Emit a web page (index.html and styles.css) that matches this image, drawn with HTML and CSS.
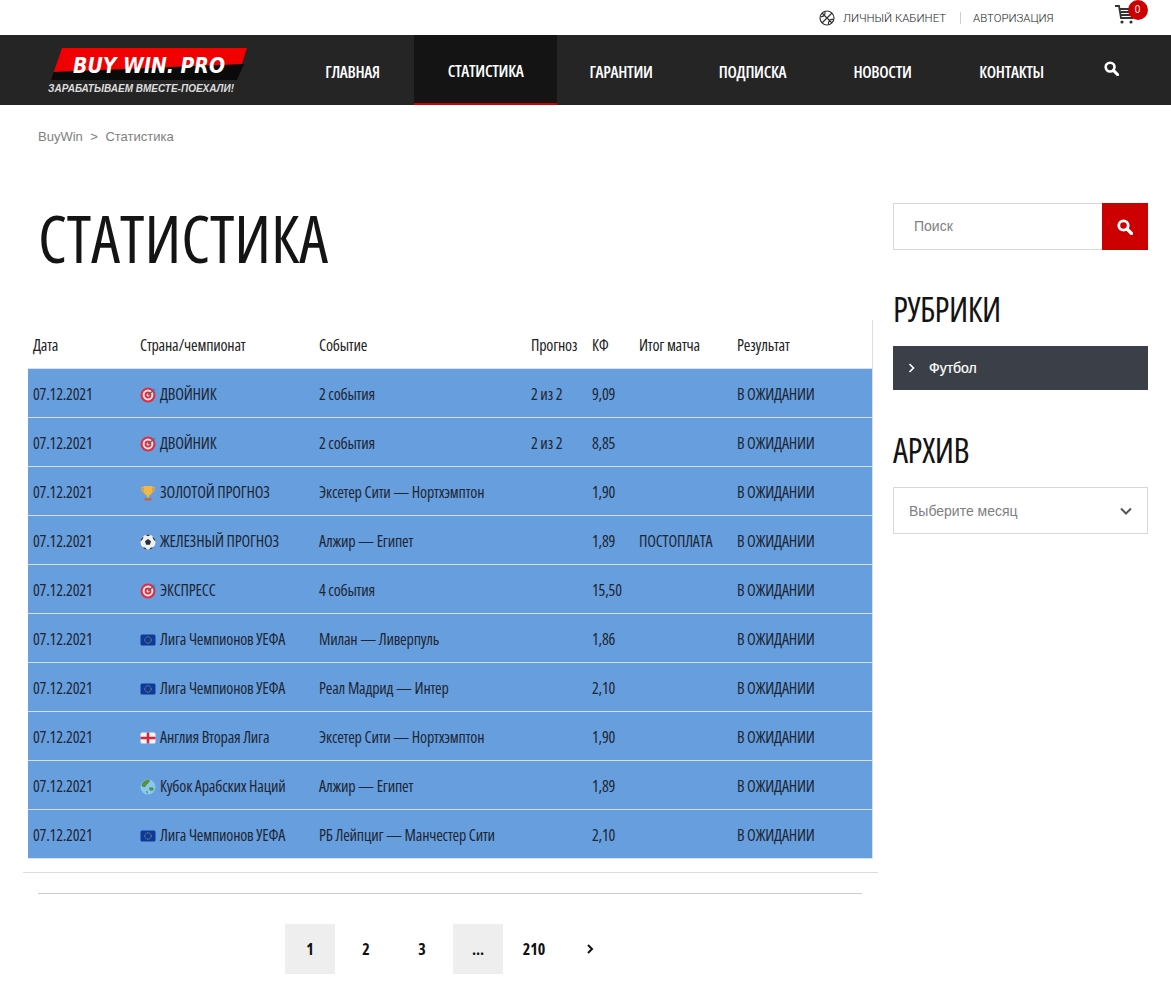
FILE: index.html
```html
<!DOCTYPE html>
<html lang="ru">
<head>
  <meta charset="UTF-8">
  <meta name="viewport" content="width=device-width, initial-scale=1.0">
  <title>Статистика</title>
  <link rel="stylesheet" href="styles.css">
</head>
<body>
  <svg class="icon-defs" aria-hidden="true">
    <symbol id="i-target" viewBox="0 0 16 16">
      <circle cx="8" cy="8" r="7.5" fill="#dd2e44"/>
      <circle cx="8" cy="8" r="5.4" fill="#f5e6e8"/>
      <circle cx="8" cy="8" r="3.4" fill="#dd2e44"/>
      <circle cx="8" cy="8" r="1.5" fill="#f5e6e8"/>
      <path d="M8 8l6-5" stroke="#55606b" stroke-width="1.2"/>
      <path d="M13 1.5l2.5 1-2 2z" fill="#3b88c3"/>
    </symbol>
    <symbol id="i-trophy" viewBox="0 0 16 16">
      <path d="M1 2h14v2.5c0 2-1.700 3.500-4 3.500H5C2.700 8 1 6.500 1 4.500z" fill="#e0a63a"/>
      <path d="M2.500 3.300h11v1.200c0 1.300-1 2.200-2.500 2.200H5c-1.500 0-2.500-.9-2.500-2.200z" fill="#679edd"/>
      <path d="M3.500 1h9v4.500c0 2.800-2 4.500-3.500 5v2H7v-2c-1.500-.5-3.500-2.200-3.500-5z" fill="#f4b73f"/>
      <path d="M4.500 13h7v2.500h-7z" fill="#c1694f"/>
    </symbol>
    <symbol id="i-ball" viewBox="0 0 16 16">
      <circle cx="8" cy="8" r="7.5" fill="#eef0f2"/>
      <path d="M8 5l3 2.200-1.100 3.500H6.100L5 7.200z" fill="#292f33"/>
      <path d="M5.500 .9L8 2.200 10.500 .9 8 .5zM.6 7.500L2.800 5 3.600 2.400C1.700 3.700.6 5.400.6 7.500zM15.400 7.500L13.200 5l-.8-2.600c1.900 1.300 3 3 3 5.100zM2.600 13.200l2.900.5 1.300 1.700c-1.800-.2-3.200-1-4.200-2.200zM13.400 13.200l-2.900.5-1.300 1.700c1.800-.2 3.200-1 4.200-2.200z" fill="#292f33"/>
    </symbol>
    <symbol id="i-eu" viewBox="0 0 16 16">
      <rect x="0.500" y="2.500" width="15" height="11" rx="1.500" fill="#0d3a9a"/>
      <circle cx="8" cy="8" r="3.200" fill="none" stroke="#e8c53a" stroke-width="0.8" stroke-dasharray="0.800 0.900"/>
    </symbol>
    <symbol id="i-eng" viewBox="0 0 16 16">
      <rect x="0.500" y="2.500" width="15" height="11" rx="1.500" fill="#f2f4f6"/>
      <path d="M6.700 2.500h2.600v11H6.700zM.5 6.700h15v2.600H.5z" fill="#d9263c"/>
    </symbol>
    <symbol id="i-globe" viewBox="0 0 16 16">
      <circle cx="8" cy="8" r="7.500" fill="#88c9f0"/>
      <path d="M1.500 6c1-3 3.500-5 7-5.400 1.500.6 1.500 2 .5 3S7.500 5 6.500 6 5.500 8.500 4 8.300 2 7 1.500 6z" fill="#5c913b"/>
      <path d="M9.500 8.500c1.500-.5 3-.5 4 .5.500 1 0 2.200-1.300 2.700-1.200.3-2.700-.2-3-1.400-.2-.8-.2-1.500.3-1.800zM6 11.500l1.500 1 .5 2-1.500-.5z" fill="#5c913b"/>
    </symbol>
    <symbol id="i-search" viewBox="0 0 16 16">
      <circle cx="6.500" cy="6.500" r="4.700" fill="none" stroke="currentColor" stroke-width="2.800"/>
      <path d="M10 10l4.500 4.500" stroke="currentColor" stroke-width="3.200" stroke-linecap="round"/>
    </symbol>
  </svg>

  <div class="topbar">
    <svg class="ball-icon" width="16" height="16" viewBox="0 0 16 16" fill="none" stroke="#333" stroke-width="1.200">
      <circle cx="8" cy="8" r="7"/>
      <path d="M3 3l10 10M13 3L3 13M6 1.500C6.500 5 4.500 7 1.500 6.500M14.500 9.500C11 9 9 11 9.500 14.500"/>
    </svg>
    <a class="toplink" href="#">ЛИЧНЫЙ КАБИНЕТ</a>
    <span class="topdivider"></span>
    <a class="toplink" href="#">АВТОРИЗАЦИЯ</a>
    <div class="cart">
      <svg width="21" height="21" viewBox="0 0 21 21" fill="none" stroke="#333" stroke-width="1.800">
        <path d="M0 2h4l2 12h12"/>
        <path d="M5 5h13M5.500 8h12M6 11h11"/>
        <circle cx="7" cy="18" r="1.600" fill="#333" stroke="none"/>
        <circle cx="16" cy="18" r="1.600" fill="#333" stroke="none"/>
      </svg>
      <span class="cart-badge">0</span>
    </div>
  </div>

  <header class="navbar">
    <a class="logo" href="#">
      <svg width="240" height="64" viewBox="0 0 240 64">
        <polygon points="15,3 200,3 190,35 4,35" fill="#f00000"/>
        <polygon points="6.500,27 197,19 190,35 4,35" fill="#0a0a0a"/>
        <text class="logo-name" x="26" y="28" textLength="152" lengthAdjust="spacingAndGlyphs">BUY WIN. PRO</text>
        <text class="logo-tag" x="1" y="47" textLength="186" lengthAdjust="spacingAndGlyphs">ЗАРАБАТЫВАЕМ ВМЕСТЕ-ПОЕХАЛИ!</text>
      </svg>
    </a>
    <nav class="menu">
      <a class="menu-item menu-main" href="#">ГЛАВНАЯ</a>
      <a class="menu-item menu-stat active" href="#">СТАТИСТИКА</a>
      <a class="menu-item menu-guar" href="#">ГАРАНТИИ</a>
      <a class="menu-item menu-sub" href="#">ПОДПИСКА</a>
      <a class="menu-item menu-news" href="#">НОВОСТИ</a>
      <a class="menu-item menu-cont" href="#">КОНТАКТЫ</a>
    </nav>
    <svg class="nav-search" width="15" height="15"><use href="#i-search"/></svg>
  </header>

  <div class="breadcrumbs">
    <a href="#">BuyWin</a><span class="sep">&gt;</span><span>Статистика</span>
  </div>

  <div class="page">
    <main class="content">
      <h1>СТАТИСТИКА</h1>
      <div class="table-wrap">
        <table class="stats">
          <colgroup>
            <col class="c-date"><col class="c-league"><col class="c-event"><col class="c-tip"><col class="c-kf"><col class="c-final"><col class="c-res">
          </colgroup>
          <thead>
            <tr><th>Дата</th><th>Страна/чемпионат</th><th>Событие</th><th>Прогноз</th><th>КФ</th><th>Итог матча</th><th>Результат</th></tr>
          </thead>
          <tbody>
            <tr><td>07.12.2021</td><td><svg class="flag"><use href="#i-target"/></svg>ДВОЙНИК</td><td>2 события</td><td>2 из 2</td><td>9,09</td><td></td><td>В ОЖИДАНИИ</td></tr>
            <tr><td>07.12.2021</td><td><svg class="flag"><use href="#i-target"/></svg>ДВОЙНИК</td><td>2 события</td><td>2 из 2</td><td>8,85</td><td></td><td>В ОЖИДАНИИ</td></tr>
            <tr><td>07.12.2021</td><td><svg class="flag"><use href="#i-trophy"/></svg>ЗОЛОТОЙ ПРОГНОЗ</td><td>Эксетер Сити — Нортхэмптон</td><td></td><td>1,90</td><td></td><td>В ОЖИДАНИИ</td></tr>
            <tr><td>07.12.2021</td><td><svg class="flag"><use href="#i-ball"/></svg>ЖЕЛЕЗНЫЙ ПРОГНОЗ</td><td>Алжир — Египет</td><td></td><td>1,89</td><td>ПОСТОПЛАТА</td><td>В ОЖИДАНИИ</td></tr>
            <tr><td>07.12.2021</td><td><svg class="flag"><use href="#i-target"/></svg>ЭКСПРЕСС</td><td>4 события</td><td></td><td>15,50</td><td></td><td>В ОЖИДАНИИ</td></tr>
            <tr><td>07.12.2021</td><td><svg class="flag"><use href="#i-eu"/></svg>Лига Чемпионов УЕФА</td><td>Милан — Ливерпуль</td><td></td><td>1,86</td><td></td><td>В ОЖИДАНИИ</td></tr>
            <tr><td>07.12.2021</td><td><svg class="flag"><use href="#i-eu"/></svg>Лига Чемпионов УЕФА</td><td>Реал Мадрид — Интер</td><td></td><td>2,10</td><td></td><td>В ОЖИДАНИИ</td></tr>
            <tr><td>07.12.2021</td><td><svg class="flag"><use href="#i-eng"/></svg>Англия Вторая Лига</td><td>Эксетер Сити — Нортхэмптон</td><td></td><td>1,90</td><td></td><td>В ОЖИДАНИИ</td></tr>
            <tr><td>07.12.2021</td><td><svg class="flag"><use href="#i-globe"/></svg>Кубок Арабских Наций</td><td>Алжир — Египет</td><td></td><td>1,89</td><td></td><td>В ОЖИДАНИИ</td></tr>
            <tr><td>07.12.2021</td><td><svg class="flag"><use href="#i-eu"/></svg>Лига Чемпионов УЕФА</td><td>РБ Лейпциг — Манчестер Сити</td><td></td><td>2,10</td><td></td><td>В ОЖИДАНИИ</td></tr>
          </tbody>
        </table>
      </div>
      <hr class="rule">
      <div class="pagination">
        <a class="page-num current" href="#">1</a>
        <a class="page-num" href="#">2</a>
        <a class="page-num" href="#">3</a>
        <span class="page-num current">...</span>
        <a class="page-num" href="#">210</a>
        <a class="page-num" href="#">
          <svg width="8" height="10" viewBox="0 0 8 10" fill="none" stroke="#111" stroke-width="2"><path d="M2 1l4 4-4 4"/></svg>
        </a>
      </div>
    </main>

    <aside class="sidebar">
      <form class="search-form">
        <input class="search-input" type="text" placeholder="Поиск">
        <button class="search-btn" type="button"><svg width="16" height="16"><use href="#i-search"/></svg></button>
      </form>
      <h2 class="widget-title">РУБРИКИ</h2>
      <a class="cat-link" href="#">
        <svg width="7" height="10" viewBox="0 0 7 10" fill="none" stroke="#fff" stroke-width="1.600"><path d="M1.500 1l4 4-4 4"/></svg>
        Футбол
      </a>
      <h2 class="widget-title">АРХИВ</h2>
      <div class="month-select">
        <span>Выберите месяц</span>
        <svg width="12" height="8" viewBox="0 0 12 8" fill="none" stroke="#555" stroke-width="2"><path d="M1 1.500l5 5 5-5"/></svg>
      </div>
    </aside>
  </div>
</body>
</html>
```
FILE: styles.css
```css
/* Base */
body {
  margin: 0;
  font-family: 'Liberation Sans', Arial, sans-serif;
  background: #fff;
  color: #141414;
}

a {
  color: inherit;
  text-decoration: none;
}

.icon-defs {
  display: none;
}

/* Top bar */
.topbar {
  height: 35px;
  display: flex;
  align-items: center;
  padding-left: 819px;
  box-sizing: border-box;
}

.toplink {
  font-family: 'Roboto', sans-serif;
  font-weight: 300;
  font-size: 11.400px;
  color: #222;
  padding-top: 1px;
}

.ball-icon {
  margin-right: 8px;
}

.topdivider {
  width: 1px;
  height: 12px;
  background: #ccc;
  margin: 0 12px 0 14px;
}

.cart {
  margin-left: 61px;
  position: relative;
  width: 34px;
  height: 21px;
  margin-top: -6px;
}

.cart-badge {
  position: absolute;
  top: -4px;
  left: 13px;
  width: 20px;
  height: 20px;
  border-radius: 50%;
  background: #cc0000;
  color: #fff;
  font-size: 10px;
  line-height: 20px;
  text-align: center;
}

/* Nav */
.navbar {
  height: 70px;
  background: #252525;
  display: flex;
  position: relative;
}

.logo {
  width: 291px;
  padding: 10px 0 0 47px;
  box-sizing: border-box;
}

.logo-name {
  font-family: 'DejaVu Sans', sans-serif;
  font-weight: 700;
  font-style: italic;
  font-size: 22px;
  fill: #fff;
}

.logo-tag {
  font-family: 'Liberation Sans', sans-serif;
  font-weight: 700;
  font-style: italic;
  font-size: 10.500px;
  fill: #ddd;
}

.menu {
  display: flex;
}

.menu-item {
  display: flex;
  align-items: center;
  justify-content: center;
  box-sizing: border-box;
  height: 70px;
  padding-top: 2px;
  font-family: 'Open Sans', sans-serif;
  font-stretch: 75%;
  font-weight: 600;
  font-size: 16.500px;
  letter-spacing: -.3px;
  color: #fff;
}

.menu-main { width: 123px; }
.menu-stat { width: 143px; }
.menu-guar { width: 128px; }
.menu-sub { width: 135px; }
.menu-news { width: 125px; }
.menu-cont { width: 133px; }

.menu-item.active {
  background: #141414;
  border-bottom: 2px solid #c00;
}

.nav-search {
  margin: 26px 0 0 26px;
  color: #fff;
}

/* Breadcrumbs */
.breadcrumbs {
  padding: 24px 0 0 38px;
  font-size: 13px;
  line-height: 16px;
  color: #808080;
}

.sep {
  margin: 0 7.500px;
}

/* Layout */
.page {
  display: flex;
  margin-top: 58px;
}

.content {
  width: 878px;
  padding-left: 23px;
  box-sizing: border-box;
}

h1 {
  margin: -2px 0 44px 15px;
  font-family: 'Open Sans', sans-serif;
  font-stretch: 75%;
  font-weight: 400;
  font-size: 65px;
  line-height: 75px;
  color: #141414;
}

/* Table */
.table-wrap {
  padding: 0 5px 13px;
  border-bottom: 1px solid #ddd;
}

.stats {
  width: 844px;
  table-layout: fixed;
  border-collapse: collapse;
  border-right: 1px solid #ddd;
  font-family: 'Open Sans', sans-serif;
  font-stretch: 75%;
  font-size: 16px;
  letter-spacing: -.2px;
  color: #1d2633;
}

.c-date { width: 107px; }
.c-league { width: 179px; }
.c-event { width: 212px; }
.c-tip { width: 61px; }
.c-kf { width: 47px; }
.c-final { width: 98px; }
.c-res { width: 140px; }

.stats th {
  height: 48px;
  padding: 2px 0 0 5px;
  box-sizing: border-box;
  text-align: left;
  font-weight: 400;
  color: #222;
}

.stats td {
  height: 49px;
  padding: 2px 0 0 5px;
  box-sizing: border-box;
  background: #679edd;
  border-top: 1px solid #d6e2f0;
  white-space: nowrap;
}

.stats tbody tr:last-child td {
  border-bottom: 1px solid #d6e2f0;
}

.flag {
  width: 16px;
  height: 16px;
  margin-right: 4px;
  vertical-align: -3px;
}

.rule {
  margin: 20px 16px 0 15px;
  border: 0;
  border-top: 1px solid #ccc;
}

/* Pagination */
.pagination {
  display: flex;
  gap: 6px;
  margin: 30px 0 0 262px;
}

.page-num {
  width: 50px;
  height: 50px;
  display: flex;
  align-items: center;
  justify-content: center;
  font-family: 'Open Sans', sans-serif;
  font-stretch: 75%;
  font-weight: 700;
  font-size: 16px;
  color: #111;
}

.page-num.current {
  background: #eee;
}

/* Sidebar */
.sidebar {
  width: 255px;
  margin-left: 15px;
}

.search-form {
  display: flex;
  height: 47px;
}

.search-input {
  flex: 1;
  min-width: 0;
  padding: 0 20px 2px;
  border: 1px solid #d8d8d8;
  border-right: 0;
  font-family: inherit;
  font-size: 14px;
  outline: none;
}

.search-input::placeholder {
  color: #808080;
}

.search-btn {
  width: 46px;
  padding: 0;
  border: none;
  background: #cc0000;
  color: #fff;
  display: flex;
  align-items: center;
  justify-content: center;
}

.widget-title {
  margin: 0 0 16px;
  padding-top: 38px;
  font-family: 'Open Sans', sans-serif;
  font-stretch: 75%;
  font-weight: 400;
  font-size: 34px;
  letter-spacing: -.5px;
  line-height: 42px;
  color: #141414;
}

.cat-link {
  height: 44px;
  margin-bottom: 1px;
  display: flex;
  align-items: center;
  gap: 14px;
  padding-left: 15px;
  background: #3b4048;
  color: #fff;
  font-size: 14px;
  -webkit-text-stroke: .2px #fff;
}

.month-select {
  height: 47px;
  box-sizing: border-box;
  display: flex;
  align-items: center;
  justify-content: space-between;
  padding: 0 15px;
  border: 1px solid #d8d8d8;
  font-size: 14px;
  color: #808080;
}
```
